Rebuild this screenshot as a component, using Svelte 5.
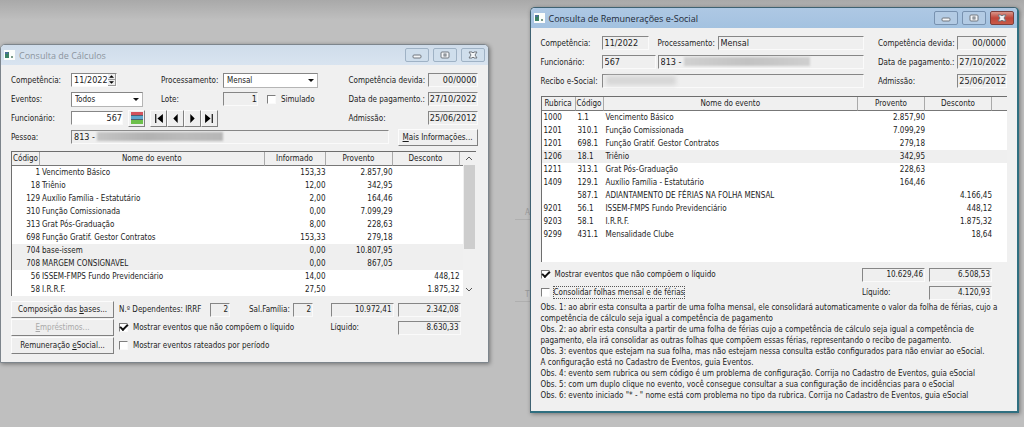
<script lang="ts">
	interface Evento {
		codigo: string;
		nome: string;
		rubrica?: string;
		informado?: string;
		provento?: string;
		desconto?: string;
		destaque?: boolean;
	}

	const calculos: Evento[] = [
		{ codigo: '1', nome: 'Vencimento Básico', informado: '153,33', provento: '2.857,90' },
		{ codigo: '18', nome: 'Triênio', informado: '12,00', provento: '342,95' },
		{ codigo: '129', nome: 'Auxílio Família - Estatutário', informado: '2,00', provento: '164,46' },
		{ codigo: '310', nome: 'Função Comissionada', informado: '0,00', provento: '7.099,29' },
		{ codigo: '313', nome: 'Grat Pós-Graduação', informado: '8,00', provento: '228,63' },
		{ codigo: '698', nome: 'Função Gratif. Gestor Contratos', informado: '153,33', provento: '279,18' },
		{ codigo: '704', nome: 'base-issem', informado: '0,00', provento: '10.807,95', destaque: true },
		{ codigo: '708', nome: 'MARGEM CONSIGNAVEL', informado: '0,00', provento: '867,05', destaque: true },
		{ codigo: '56', nome: 'ISSEM-FMPS Fundo Previdenciário', informado: '14,00', desconto: '448,12' },
		{ codigo: '58', nome: 'I.R.R.F.', informado: '27,50', desconto: '1.875,32' }
	];

	const remuneracoes: Evento[] = [
		{ rubrica: '1000', codigo: '1.1', nome: 'Vencimento Básico', provento: '2.857,90' },
		{ rubrica: '1201', codigo: '310.1', nome: 'Função Comissionada', provento: '7.099,29' },
		{ rubrica: '1201', codigo: '698.1', nome: 'Função Gratif. Gestor Contratos', provento: '279,18' },
		{ rubrica: '1206', codigo: '18.1', nome: 'Triênio', provento: '342,95', destaque: true },
		{ rubrica: '1211', codigo: '313.1', nome: 'Grat Pós-Graduação', provento: '228,63' },
		{ rubrica: '1409', codigo: '129.1', nome: 'Auxílio Família - Estatutário', provento: '164,46' },
		{ codigo: '587.1', nome: 'ADIANTAMENTO DE FÉRIAS NA FOLHA MENSAL', desconto: '4.166,45' },
		{ rubrica: '9201', codigo: '56.1', nome: 'ISSEM-FMPS Fundo Previdenciário', desconto: '448,12' },
		{ rubrica: '9203', codigo: '58.1', nome: 'I.R.R.F.', desconto: '1.875,32' },
		{ rubrica: '9299', codigo: '431.1', nome: 'Mensalidade Clube', desconto: '18,64' }
	];

	// first / previous / next / last
	const navegacao = [
		{ titulo: 'Primeiro', path: 'M2 1h1v8H2zM9 1v8L4 5z' },
		{ titulo: 'Anterior', path: 'M7 1v8L3 5z' },
		{ titulo: 'Próximo', path: 'M3 1v8l4-4z' },
		{ titulo: 'Último', path: 'M7 1h1v8H7zM1 1v8l5-4z' }
	];

	let mostrarCalculos = $state(true);
	let mostrarRateados = $state(false);
	let mostrarRemuneracoes = $state(true);
	let consolidar = $state(false);
	let simulado = $state(false);
</script>

{#snippet barra(titulo: string)}
	<header class="titlebar">
		<svg class="app-icon" viewBox="0 0 11 10" aria-hidden="true">
			<rect width="11" height="10" fill="#fbfdfb" />
			<rect x="1" y="2" width="4" height="6" fill="#3c8266" />
			<rect x="1" y="2" width="3" height="2" fill="#4a6e9a" />
			<rect x="7" y="6" width="2" height="2" fill="#7a9a88" />
		</svg>
		<h2>{titulo}</h2>
		<button class="win-btn" aria-label="Minimizar">
			<svg viewBox="0 0 12 10"><rect x="2" y="5" width="8" height="3" rx="1" /></svg>
		</button>
		<button class="win-btn" aria-label="Maximizar">
			<svg viewBox="0 0 12 10"><rect x="2" y="2" width="8" height="6" rx="1" /><rect x="5" y="4" width="2" height="2" /></svg>
		</button>
		<button class="win-btn close" aria-label="Fechar">
			<svg viewBox="0 0 12 10"><path d="M2 2h3l1 1 1-1h3L8 5l2 3H7L6 7 5 8H2l2-3z" /></svg>
		</button>
	</header>
{/snippet}

{#snippet campo(id: string, valor: string, classe: string)}
	<input {id} class="field {classe}" value={valor} readonly />
{/snippet}

<main class="desktop">
	<div class="behind" aria-hidden="true">
		<span>A</span>
		<span>T</span>
	</div>

	<section class="window inactive">
		{@render barra('Consulta de Cálculos')}
		<div class="content">
			<div class="form">
				<label for="competencia">Competência:</label>
				<div class="spin field white">
					<input id="competencia" value="11/2022" />
					<span class="arrows">
						<button aria-label="Aumentar"><svg viewBox="0 0 6 3"><path d="M0 3h6L3 0z" /></svg></button>
						<button aria-label="Diminuir"><svg viewBox="0 0 6 3"><path d="M0 0h6L3 3z" /></svg></button>
					</span>
				</div>
				<label for="processamento">Processamento:</label>
				<div class="select wide">
					<select id="processamento"><option>Mensal</option></select>
				</div>
				<label for="devida">Competência devida:</label>
				{@render campo('devida', '00/0000', 'num')}

				<label for="eventos">Eventos:</label>
				<div class="select">
					<select id="eventos"><option>Todos</option></select>
				</div>
				<label for="lote">Lote:</label>
				<div class="group">
					{@render campo('lote', '1', 'num lote')}
					<label class="check"><input type="checkbox" bind:checked={simulado} />Simulado</label>
				</div>
				<label for="pagamento">Data de pagamento.:</label>
				{@render campo('pagamento', '27/10/2022', 'num')}

				<label for="funcionario">Funcionário:</label>
				<div class="group funcionario">
					<input id="funcionario" class="field white num" value="567" />
					<button class="btn tool" aria-label="Pesquisar funcionário">
						<svg viewBox="0 0 12 12">
							<rect width="12" height="4" fill="#d3525c" />
							<rect y="4" width="12" height="4" fill="#5fa8d0" />
							<rect y="8" width="12" height="4" fill="#6cc04a" />
							<path d="M0 3h12v1H0zM0 7h12v1H0z" fill="#4b6374" />
						</svg>
					</button>
					<div class="nav">
						{#each navegacao as item (item.titulo)}
							<button class="btn" aria-label={item.titulo}>
								<svg viewBox="0 0 10 10"><path d={item.path} /></svg>
							</button>
						{/each}
					</div>
				</div>
				<label for="admissao">Admissão:</label>
				{@render campo('admissao', '25/06/2012', 'num')}

				<label for="pessoa">Pessoa:</label>
				<div class="pessoa">
					<div class="masked">
						{@render campo('pessoa', '813 -', '')}
						<i class="smudge"></i>
					</div>
					<button class="btn"><u>M</u>ais Informações...</button>
				</div>
			</div>

			<div class="list">
				<table>
					<colgroup>
						<col class="c-cod" /><col /><col class="c-inf" /><col class="c-val" /><col class="c-val" /><col class="c-end" />
					</colgroup>
					<thead>
						<tr><th>Código</th><th>Nome do evento</th><th>Informado</th><th>Provento</th><th>Desconto</th><th></th></tr>
					</thead>
					<tbody>
						{#each calculos as evento (evento.codigo)}
							<tr class:destaque={evento.destaque}>
								<td class="num">{evento.codigo}</td>
								<td>{evento.nome}</td>
								<td class="num">{evento.informado}</td>
								<td class="num">{evento.provento ?? ''}</td>
								<td class="num">{evento.desconto ?? ''}</td>
								<td></td>
							</tr>
						{/each}
					</tbody>
				</table>
				<div class="scrollbar" aria-hidden="true">
					<svg viewBox="0 0 6 5"><path d="M0 4l3-3 3 3" /></svg>
					<div class="thumb"></div>
					<svg viewBox="0 0 6 5"><path d="M0 1l3 3 3-3" /></svg>
				</div>
			</div>

			<div class="footer">
				<div class="actions">
					<button class="btn">Composição das <u>b</u>ases...</button>
					<button class="btn" disabled><u>E</u>mpréstimos...</button>
					<button class="btn">Remuneração <u>e</u>Social...</button>
				</div>
				<div class="summary">
					<div class="group">
						<label class="irrf" for="irrf">N.º Dependentes: IRRF</label>
						{@render campo('irrf', '2', 'num dep')}
						<label class="familia" for="familia">Sal.Família:</label>
						{@render campo('familia', '2', 'num dep')}
					</div>
					<input class="field num" aria-label="Total de proventos" value="10.972,41" readonly />
					<input class="field num" aria-label="Total de descontos" value="2.342,08" readonly />
					<label class="check"><input type="checkbox" bind:checked={mostrarCalculos} />Mostrar eventos que não compõem o líquido</label>
					<label for="liquido">Líquido:</label>
					{@render campo('liquido', '8.630,33', 'num')}
					<label class="check"><input type="checkbox" bind:checked={mostrarRateados} />Mostrar eventos rateados por período</label>
				</div>
			</div>
		</div>
	</section>

	<section class="window active">
		{@render barra('Consulta de Remunerações e-Social')}
		<div class="content">
			<div class="form esocial">
				<label for="r-competencia">Competência:</label>
				<div class="group proc">
					{@render campo('r-competencia', '11/2022', 'comp')}
					<label for="r-processamento">Processamento:</label>
					{@render campo('r-processamento', 'Mensal', 'grow')}
				</div>
				<label for="r-devida">Competência devida:</label>
				{@render campo('r-devida', '00/0000', 'num')}

				<label for="r-funcionario">Funcionário:</label>
				<div class="group func">
					{@render campo('r-funcionario', '567', 'func-cod')}
					<div class="masked">
						<input class="field" aria-label="Nome do funcionário" value="813 -" readonly />
						<i class="smudge light"></i>
					</div>
				</div>
				<label for="r-pagamento">Data de pagamento.:</label>
				{@render campo('r-pagamento', '27/10/2022', 'num')}

				<label for="recibo">Recibo e-Social:</label>
				<div class="masked">
					{@render campo('recibo', '', '')}
					<i class="smudge recibo"></i>
				</div>
				<label for="r-admissao">Admissão:</label>
				{@render campo('r-admissao', '25/06/2012', 'num')}
			</div>

			<div class="list tall">
				<table>
					<colgroup>
						<col class="c-rub" /><col class="c-cod" /><col /><col class="c-val" /><col class="c-val" /><col class="c-rest" />
					</colgroup>
					<thead>
						<tr><th>Rubrica</th><th>Código</th><th>Nome do evento</th><th>Provento</th><th>Desconto</th><th></th></tr>
					</thead>
					<tbody>
						{#each remuneracoes as evento (evento.codigo)}
							<tr class:destaque={evento.destaque}>
								<td>{evento.rubrica ?? ''}</td>
								<td>{evento.codigo}</td>
								<td>{evento.nome}</td>
								<td class="num">{evento.provento ?? ''}</td>
								<td class="num">{evento.desconto ?? ''}</td>
								<td></td>
							</tr>
						{/each}
					</tbody>
				</table>
			</div>

			<div class="summary esocial">
				<label class="check"><input type="checkbox" bind:checked={mostrarRemuneracoes} />Mostrar eventos que não compõem o líquido</label>
				<input class="field num" aria-label="Total de proventos" value="10.629,46" readonly />
				<input class="field num" aria-label="Total de descontos" value="6.508,53" readonly />
				<label class="check"><input type="checkbox" bind:checked={consolidar} /><span class="focus">Consolidar folhas mensal e de férias</span></label>
				<label for="r-liquido">Líquido:</label>
				{@render campo('r-liquido', '4.120,93', 'num')}
			</div>

			<div class="notes">
				<p>Obs. 1: ao abrir esta consulta a partir de uma folha mensal, ele consolidará automaticamente o valor da folha de férias, cujo a<br />competência de cálculo seja igual a competência de pagamento</p>
				<p>Obs. 2: ao abrir esta consulta a partir de uma folha de férias cujo a competência de cálculo seja igual a competência de<br />pagamento, ela irá consolidar as outras folhas que compõem essas férias, representando o recibo de pagamento.</p>
				<p>Obs. 3: eventos que estejam na sua folha, mas não estejam nessa consulta estão configurados para não enviar ao eSocial.<br />A configuração está no Cadastro de Eventos, guia Eventos.</p>
				<p>Obs. 4: evento sem rubrica ou sem código é um problema de configuração. Corrija no Cadastro de Eventos, guia eSocial</p>
				<p>Obs. 5: com um duplo clique no evento, você consegue consultar a sua configuração de incidências para o eSocial</p>
				<p>Obs. 6: evento iniciado "* - " nome está com problema no tipo da rubrica. Corrija no Cadastro de Eventos, guia eSocial</p>
			</div>
		</div>
	</section>
</main>

<style>
	:global(body) {
		margin: 0;
		background: #bfbfbf;
	}

	.desktop {
		position: relative;
		display: flex;
		align-items: flex-start;
		gap: 41px;
		box-sizing: border-box;
		min-height: 100vh;
		padding: 7px 5px 14px 0;
		background: linear-gradient(#a9a9a9, #bfbfbf 20px);
		color: #1c1c1c;
		font-family: 'DejaVu Sans Condensed', 'Liberation Sans', sans-serif;
		font-size: 8px;
		line-height: 13px;
	}

	.desktop * {
		box-sizing: border-box;
	}

	/* remains of the main form showing between the two windows */
	.behind {
		position: absolute;
		top: 206px;
		left: 50%;
		display: grid;
		gap: 68px;
		margin-left: 3px;
		color: #999;
	}

	.behind span {
		width: 16px;
		padding-left: 10px;
		border-bottom: 1px solid #afafaf;
	}

	.window {
		position: relative;
		flex: 1 1 0;
		min-width: 0;
		border: 1px solid #7d858c;
		border-radius: 5px 5px 0 0;
		background: #f0f0f0;
		box-shadow: 1px 1px 4px rgba(0, 0, 0, 0.4);
	}

	.window.inactive {
		margin-top: 37px;
	}

	.window.active {
		border-color: #3f6272;
		border-right: 2px solid #2f6f80;
		border-bottom: 2px solid #2f6f80;
	}

	.titlebar {
		display: flex;
		align-items: center;
		gap: 4px;
		height: 20px;
		padding: 0 3px;
		border-radius: 4px 4px 0 0;
		background: linear-gradient(#cfdcea, #d9e4f0);
	}

	.active .titlebar {
		background: linear-gradient(#aec8e4, #a3c2e0);
	}

	.titlebar h2 {
		flex: 1;
		margin: 0;
		color: #8c959e;
		font: 9px/13px 'Open Sans', 'Noto Sans', sans-serif;
	}

	.active .titlebar h2 {
		color: #1d2a38;
	}

	.app-icon {
		width: 11px;
		height: 10px;
	}

	.win-btn {
		width: 24px;
		height: 14px;
		padding: 0;
		border: 1px solid #9fb2c5;
		border-radius: 2px;
		background: #cfdeec;
	}

	.active .win-btn {
		border-color: #7892b0;
		background: #b3cbe4;
	}

	.win-btn svg {
		display: block;
		width: 12px;
		height: 10px;
		margin: 0 auto;
		fill: #f4f6f8;
		stroke: #70777f;
	}

	.active .win-btn.close {
		border-color: #7c3f3c;
		background: linear-gradient(#d9968a, #c0463a 50%, #c95a48);
	}

	.content {
		padding: 7px 10px 8px;
	}

	.active .content {
		padding-bottom: 10px;
	}

	.form {
		display: grid;
		grid-template-columns: 60px 90px 62px minmax(0, 1fr) 79px 50px;
		grid-auto-rows: 16px;
		row-gap: 3px;
		align-items: center;
	}

	.form.esocial {
		grid-template-columns: 61px minmax(0, 1fr) 93px 50px;
	}

	.form.esocial > label:nth-of-type(even) {
		padding-left: 14px;
	}

	label {
		white-space: nowrap;
	}

	input,
	select,
	button {
		margin: 0;
		color: inherit;
		font: inherit;
	}

	.field {
		width: 100%;
		height: 14px;
		min-width: 0;
		padding: 0 0 0 2px;
		border: 1px solid #fafafa;
		border-top-color: #868686;
		border-left-color: #868686;
		border-radius: 0;
		background: #efefef;
		font-size: 9px;
		line-height: 12px;
	}

	.white {
		background: #fff;
	}

	.num {
		text-align: right;
	}

	.field.num {
		padding: 0;
	}

	.group {
		display: flex;
		align-items: center;
	}

	.spin {
		display: flex;
		width: 46px;
		padding-right: 0;
	}

	.spin input {
		width: 100%;
		min-width: 0;
		padding: 0;
		border: 0;
		background: none;
		outline: none;
	}

	.arrows {
		display: grid;
		flex: 0 0 8px;
	}

	.arrows button {
		display: flex;
		align-items: center;
		justify-content: center;
		height: 6px;
		padding: 0;
		border: 0;
		border-right: 1px solid #999;
		border-bottom: 1px solid #999;
		background: #eee;
	}

	.arrows svg {
		width: 5px;
		height: 3px;
	}

	.select {
		position: relative;
		width: 72px;
		height: 15px;
	}

	.select.wide {
		width: 95px;
	}

	.select select {
		display: block;
		width: 100%;
		height: 100%;
		padding: 0 14px 0 3px;
		border: 1px solid #b5b5b5;
		border-top-color: #868686;
		border-left-color: #868686;
		border-radius: 0;
		background: #fff;
		appearance: none;
	}

	.select::after {
		position: absolute;
		top: 6px;
		right: 4px;
		border: 3px solid transparent;
		border-top-color: #111;
		border-bottom: 0;
		content: '';
	}

	.lote {
		width: 35px;
		margin-right: 9px;
	}

	.check {
		display: flex;
		align-items: center;
		gap: 5px;
	}

	.check input {
		display: grid;
		flex: none;
		place-items: center;
		width: 9px;
		height: 9px;
		border: 1px solid #fafafa;
		border-top-color: #7e7e7e;
		border-left-color: #7e7e7e;
		background: #fff;
		appearance: none;
	}

	.check input:checked::after {
		width: 6px;
		height: 3px;
		border: solid #111;
		border-width: 0 0 2px 2px;
		transform: translateY(-1px) rotate(-45deg);
		content: '';
	}

	.btn {
		height: 17px;
		padding: 0 2px;
		border: 1px solid #fcfcfc;
		border-right-color: #808080;
		border-bottom-color: #808080;
		border-radius: 0;
		background: #efefef;
		line-height: 13px;
		white-space: nowrap;
	}

	.btn:disabled {
		color: #a9a9a9;
	}

	.funcionario {
		grid-column: 2 / 5;
	}

	.funcionario .field {
		width: 52px;
		margin-right: 5px;
	}

	.tool {
		width: 17px;
		margin-right: 5px;
		padding: 1px;
	}

	.tool svg {
		display: block;
		width: 12px;
		height: 12px;
		margin: 0 auto;
	}

	.nav {
		display: flex;
	}

	.nav .btn {
		width: 17px;
		padding: 2px;
	}

	.nav svg {
		display: block;
		width: 11px;
		height: 11px;
	}

	.pessoa {
		display: flex;
		grid-column: 2 / -1;
		align-items: center;
		gap: 9px;
	}

	.pessoa .btn {
		width: 80px;
	}

	.masked {
		position: relative;
		display: flex;
		flex: 1;
		min-width: 0;
	}

	.smudge {
		position: absolute;
		top: 2px;
		left: 26px;
		width: 126px;
		height: 9px;
		background: linear-gradient(90deg, #c4c4c4, #b2b2b2 40%, #bcbcbc 70%, #b6b6b6);
		filter: blur(1px);
	}

	.smudge.light {
		background: linear-gradient(90deg, #d0d0d0, #c2c2c2 50%, #cfcfcf);
	}

	.smudge.recibo {
		left: 4px;
		width: 70px;
		background: #d6d6d6;
		filter: blur(2px);
	}

	.comp {
		width: 47px;
		margin-right: 9px;
	}

	.proc label {
		width: 60px;
	}

	.proc .grow {
		flex: 1;
	}

	.func {
		gap: 2px;
	}

	.func-cod {
		width: 54px;
	}

	.list {
		display: flex;
		margin: 6px 2px 5px 0;
		border-top: 1px solid #6e6e6e;
		border-left: 1px solid #6e6e6e;
		background: #fff;
	}

	.list.tall {
		min-height: 166px;
		margin: 7px 0 4px;
		align-items: flex-start;
	}

	table {
		flex: 1;
		width: 100%;
		table-layout: fixed;
		border-collapse: separate;
		border-spacing: 0;
	}

	.c-cod {
		width: 28px;
	}

	.c-rub {
		width: 34px;
	}

	.c-inf {
		width: 61px;
	}

	.c-val {
		width: 67px;
	}

	.c-end {
		width: 3px;
	}

	.c-rest {
		width: 15px;
	}

	th {
		height: 14px;
		padding: 0;
		border-right: 1px solid #aaa;
		border-bottom: 1px solid #777;
		background: #f0f0f0;
		font-weight: normal;
		line-height: 12px;
	}

	th:last-child {
		border-right: 0;
	}

	td {
		height: 13px;
		padding: 0 0 0 2px;
		line-height: 13px;
		white-space: nowrap;
	}

	td.num {
		padding: 0;
	}

	.destaque td {
		background: #efefef;
	}

	.scrollbar {
		display: flex;
		flex: 0 0 13px;
		flex-direction: column;
		align-items: center;
		padding: 4px 0;
		background: #f0f0f0;
	}

	.scrollbar svg {
		width: 6px;
		height: 5px;
		fill: none;
		stroke: #555;
	}

	.thumb {
		width: 11px;
		height: 84px;
		margin: 4px 0 auto;
		background: #cdcdcd;
	}

	.footer {
		display: flex;
		gap: 5px;
	}

	.actions {
		display: grid;
		flex: 0 0 103px;
		grid-template-columns: minmax(0, 1fr);
		gap: 1px;
	}

	.summary {
		display: grid;
		flex: 1;
		grid-template-columns: minmax(0, 1fr) 63px 63px;
		grid-auto-rows: 17px;
		gap: 1px 4px;
		align-items: center;
		padding-right: 17px;
	}

	.summary.esocial {
		padding-right: 15px;
	}

	.summary .field {
		padding-right: 1px;
		font-size: 8px;
	}

	.irrf {
		width: 91px;
	}

	.familia {
		width: 63px;
		padding-left: 19px;
	}

	.dep {
		width: 20px;
	}

	.focus {
		margin-left: -1px;
		outline: 1px dotted #555;
		line-height: 11px;
	}

	.notes {
		padding-top: 1px;
		line-height: 11px;
	}

	.notes p {
		margin: 0;
	}
</style>
